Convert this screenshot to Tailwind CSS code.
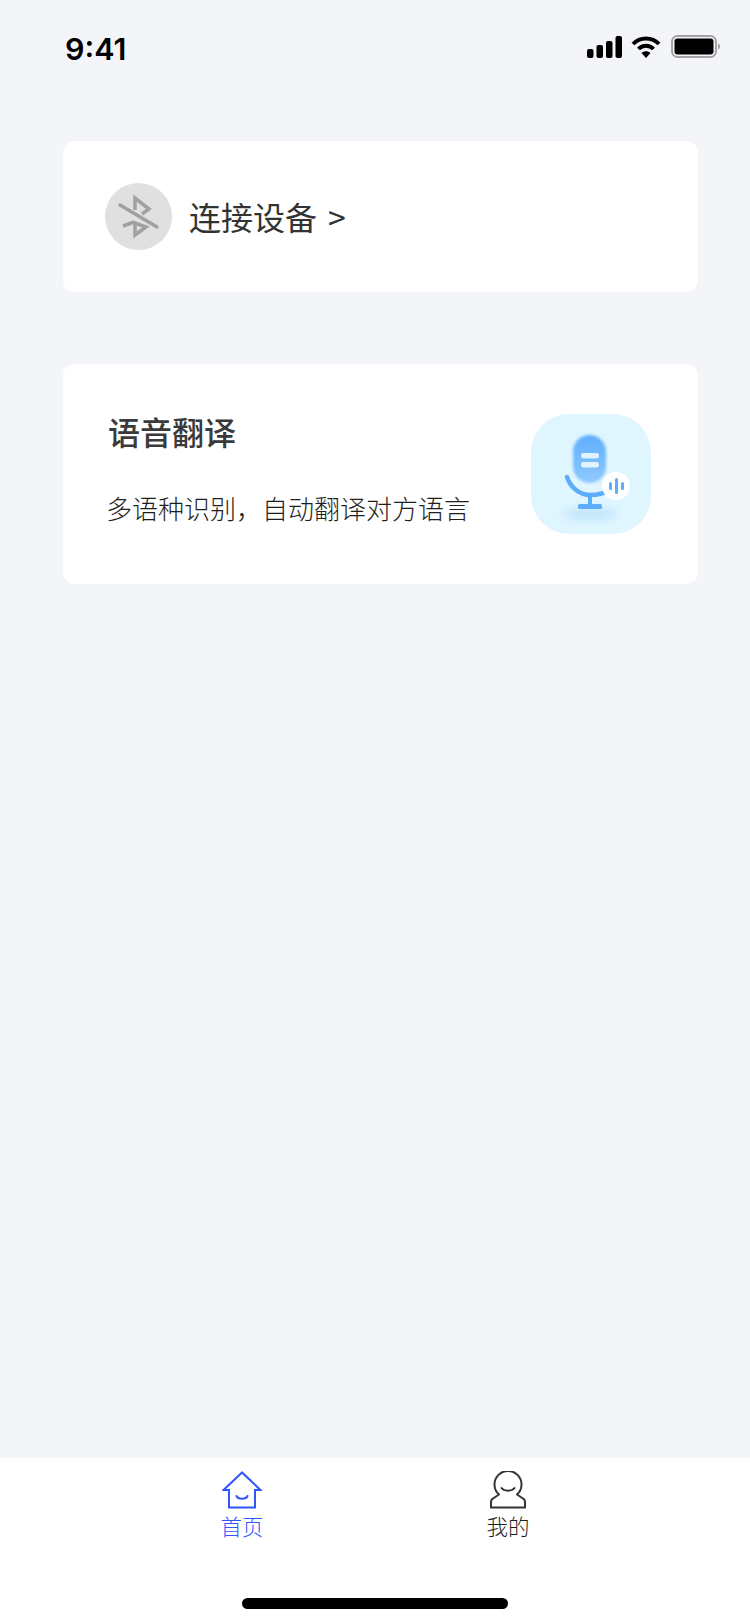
<!DOCTYPE html>
<html lang="zh-CN">
<head>
    <meta charset="UTF-8">
    <meta name="viewport" content="width=device-width, initial-scale=1.0">
    <title>首页</title>
    <script src="https://cdn.jsdelivr.net/npm/@tailwindcss/browser@4"></script>
</head>
<body class="bg-[#f4f5f9] font-['Noto_Sans_CJK_SC','Noto_Sans',sans-serif] text-[#333333]">
    <div class="w-[750px] h-[1624px] flex flex-col overflow-hidden">

        <!-- Status bar -->
        <div class="h-[141px] shrink-0 flex items-start justify-between pl-[65px] pr-[30px] pt-[31px]">
            <span class="font-['Inter',sans-serif] font-semibold text-[30.500px] leading-[36px] text-black">9:41</span>
            <div class="flex items-center pt-[4px]">
                <svg width="35" height="22" viewBox="0 0 35 22" fill="#000">
                    <rect x="0" y="13" width="6.5" height="9" rx="2"/>
                    <rect x="9.5" y="9" width="6.5" height="13" rx="2"/>
                    <rect x="19" y="5" width="6.5" height="17" rx="2"/>
                    <rect x="28.5" y="0" width="6.5" height="22" rx="2"/>
                </svg>
                <svg class="ml-[9px]" width="30" height="23" viewBox="0 0 30 23" fill="none" stroke="#000" stroke-width="4">
                    <path d="M2 9 C9 1.500 21 1.500 28 9"/>
                    <path d="M7.500 14 C11.500 9.500 18.500 9.500 22.500 14"/>
                    <path d="M15 23 L10.500 18 C13 15.800 17 15.800 19.500 18 Z" fill="#000" stroke="none"/>
                </svg>
                <svg class="ml-[10px]" width="49" height="23" viewBox="0 0 49 23" fill="none">
                    <rect x="1" y="1" width="44" height="21" rx="5.500" stroke="#a3a3a8" stroke-width="2"/>
                    <rect x="3.500" y="3.500" width="39" height="16" rx="3" fill="#000"/>
                    <path d="M47 8.500 C48.500 9 49 10 49 11.500 C49 13 48.500 14 47 14.500 Z" fill="#a3a3a8"/>
                </svg>
            </div>
        </div>

        <!-- Main -->
        <main class="flex-1 pl-[63px] pr-[52px]">
            <div class="h-[151px] bg-white rounded-[12px] flex items-center pl-[42px]">
                <div class="w-[67px] h-[67px] rounded-full bg-[#e0e0e0]">
                    <svg width="67" height="67" viewBox="0 0 67 67" fill="none" stroke="#a0a0a0" stroke-width="3.500">
                        <path d="M15 22 L52 44" stroke-linecap="round"/>
                        <path d="M30 27 V15 L44 26 L37 31"/>
                        <path d="M18 43 L29 39 M30 40 V52 L41 44 Z"/>
                    </svg>
                </div>
                <span class="ml-[17px] mb-[2px] text-[32px] leading-[44px]">连接设备</span>
                <span class="ml-[11px] mb-[2px] text-[32px] leading-[44px]">&gt;</span>
            </div>

            <div class="mt-[72px] h-[220px] bg-white rounded-[12px] flex items-start justify-between pl-[43px] pr-[47px]">
                <div class="pt-[45px]">
                    <h2 class="pl-[2px] text-[32px] leading-[44px] font-medium text-[#3a3a3a]">语音翻译</h2>
                    <p class="mt-[37px] text-[26px] leading-[36px] font-light text-[#1f1f1f]">多语种识别，自动翻译对方语言</p>
                </div>
                <!-- Mic tile -->
                <div class="mt-[50px] w-[120px] h-[120px] rounded-[38px] bg-[#e0f6ff]">
                    <svg width="120" height="120" viewBox="0 0 120 120" fill="none">
                        <defs>
                            <linearGradient id="micBody" x1="0" y1="0" x2="0" y2="1">
                                <stop offset="0" stop-color="#5eaefc"/>
                                <stop offset="1" stop-color="#8ec9fd"/>
                            </linearGradient>
                            <filter id="soft" x="-30%" y="-30%" width="160%" height="160%">
                                <feGaussianBlur stdDeviation="1.800"/>
                            </filter>
                            <filter id="shadow" x="-40%" y="-100%" width="180%" height="300%">
                                <feGaussianBlur stdDeviation="5"/>
                            </filter>
                        </defs>
                        <ellipse cx="59" cy="100" rx="28" ry="6" fill="#bfe3fb" filter="url(#shadow)"/>
                        <path d="M36 63 C40 75 50 81 59 81 C66 81 72 80 80 76" stroke="#5cadfb" stroke-width="4.500" stroke-linecap="round"/>
                        <rect x="57" y="82" width="4" height="9" fill="#5cadfb"/>
                        <rect x="47" y="90" width="24" height="5" rx="1.500" fill="#5cadfb"/>
                        <rect x="42" y="21" width="33" height="48" rx="16.500" fill="url(#micBody)" filter="url(#soft)"/>
                        <rect x="50" y="39" width="18" height="5.500" rx="2.750" fill="#e3f2ff"/>
                        <rect x="50" y="48" width="18" height="5.500" rx="2.750" fill="#e3f2ff"/>
                        <circle cx="85" cy="72" r="14" fill="#fff"/>
                        <rect x="78" y="68" width="3" height="8" rx="1.500" fill="#5cadfb"/>
                        <rect x="84" y="64" width="3" height="16" rx="1.500" fill="#5cadfb"/>
                        <rect x="90" y="68" width="3" height="8" rx="1.500" fill="#5cadfb"/>
                    </svg>
                </div>
            </div>
        </main>

        <!-- Tab bar -->
        <nav class="h-[166px] shrink-0 bg-white flex flex-col">
            <div class="flex justify-center gap-[224px] pt-[13px]">
                <div class="w-[42px] flex flex-col items-center text-[#2f55ff]">
                    <svg width="40" height="38" viewBox="0 0 40 38" fill="none" stroke="currentColor" stroke-width="2">
                        <path d="M20 1.500 L1.500 19 H7 V36.500 H33 V19 H38.500 Z"/>
                        <path d="M14.500 25 C16 28.500 24 28.500 25.500 25" stroke-linecap="round"/>
                    </svg>
                    <span class="text-[21.500px] leading-[29px] mt-[2px] whitespace-nowrap font-light">首页</span>
                </div>
                <div class="w-[42px] flex flex-col items-center text-[#1f1f1f]">
                    <svg class="text-[#333333]" width="36" height="38" viewBox="0 0 36 38" fill="none" stroke="currentColor" stroke-width="2">
                        <path d="M9 23.500 A13.500 13.500 0 1 1 27 23.500 L33 27.500 Q35 28.500 35 31 V36.500 H1 V31 Q1 28.500 3 27.500 Z" stroke-linejoin="round"/>
                        <path d="M11.500 17 C14 20.500 22 20.500 24.500 17" stroke-linecap="round"/>
                    </svg>
                    <span class="text-[21.500px] leading-[29px] mt-[2px] whitespace-nowrap font-light">我的</span>
                </div>
            </div>
            <div class="mt-auto mb-[15px] mx-auto w-[266px] h-[11px] rounded-full bg-black"></div>
        </nav>
    </div>
</body>
</html>
